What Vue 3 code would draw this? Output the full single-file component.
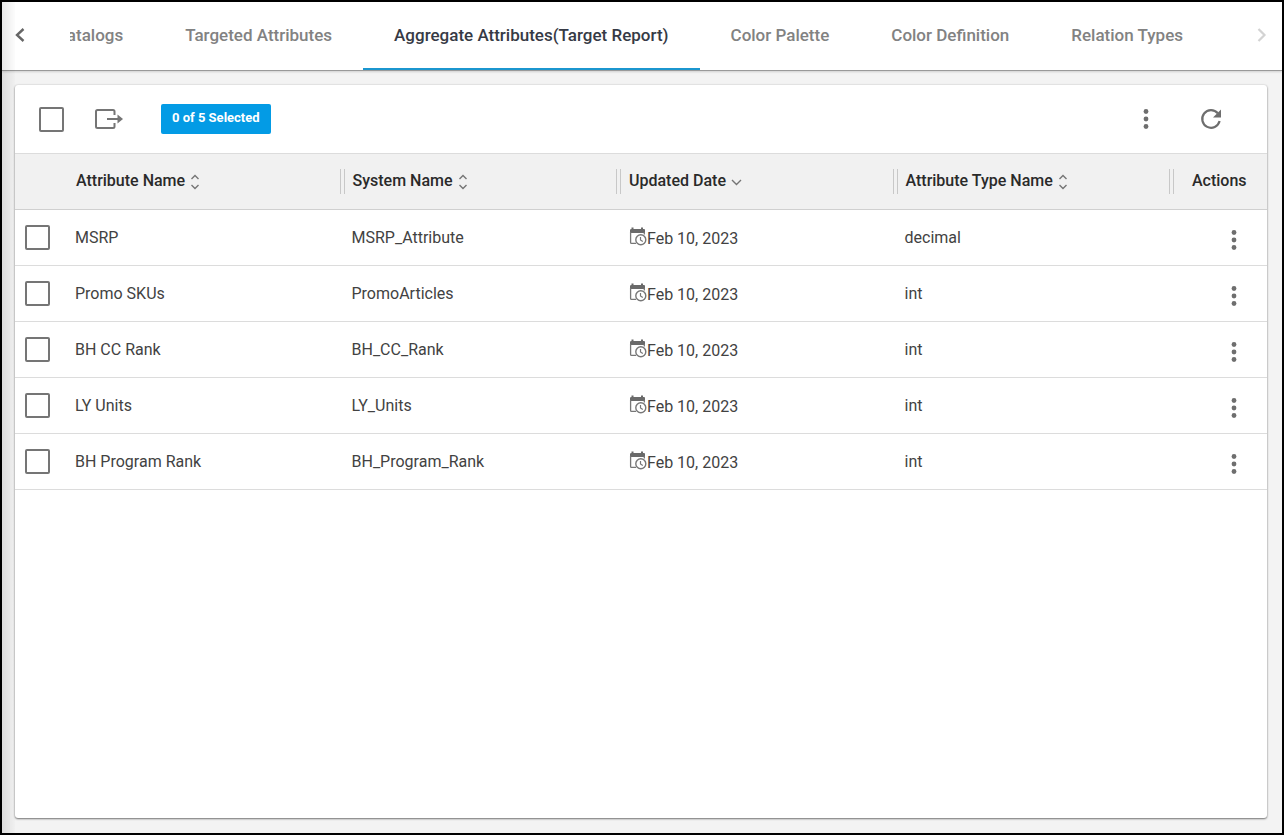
<script setup>
import { ref } from 'vue'

const tabs = ['Catalogs', 'Targeted Attributes', 'Aggregate Attributes(Target Report)', 'Color Palette', 'Color Definition', 'Relation Types']
const activeTab = ref(2)

const columns = [
  { label: 'Attribute Name', sort: 'both' },
  { label: 'System Name', sort: 'both' },
  { label: 'Updated Date', sort: 'down' },
  { label: 'Attribute Type Name', sort: 'both' },
]

const rows = ref([
  { name: 'MSRP', system: 'MSRP_Attribute', date: 'Feb 10, 2023', type: 'decimal', checked: false },
  { name: 'Promo SKUs', system: 'PromoArticles', date: 'Feb 10, 2023', type: 'int', checked: false },
  { name: 'BH CC Rank', system: 'BH_CC_Rank', date: 'Feb 10, 2023', type: 'int', checked: false },
  { name: 'LY Units', system: 'LY_Units', date: 'Feb 10, 2023', type: 'int', checked: false },
  { name: 'BH Program Rank', system: 'BH_Program_Rank', date: 'Feb 10, 2023', type: 'int', checked: false },
])

function toggleAll(event) {
  rows.value.forEach((row) => { row.checked = event.target.checked })
}
</script>

<template>
  <div class="page">
    <nav class="tabbar">
      <button class="nav prev" aria-label="Previous tabs">
        <svg width="12" height="16" viewBox="0 0 12 16"><path d="M9.5 2 L3 8 L9.5 14" fill="none" stroke="#666" stroke-width="2.4" /></svg>
      </button>
      <div class="tabs" role="tablist">
        <button
          v-for="(tab, i) in tabs"
          :key="tab"
          class="tab"
          :class="{ active: i === activeTab }"
          role="tab"
          :aria-selected="i === activeTab"
          @click="activeTab = i"
        >{{ tab }}</button>
      </div>
      <button class="nav next" aria-label="Next tabs">
        <svg width="12" height="16" viewBox="0 0 12 16"><path d="M2.5 2 L8.5 8 L2.5 14" fill="none" stroke="#d3d3d3" stroke-width="2.2" /></svg>
      </button>
    </nav>

    <main class="content">
      <section class="card">
        <div class="toolbar">
          <input type="checkbox" class="check" aria-label="Select all" @change="toggleAll" />
          <button class="icon export" aria-label="Export">
            <svg width="28" height="22" viewBox="0 0 28 22">
              <path d="M19.5 7 V3.5 Q19.5 2 18 2 H2.5 Q1 2 1 3.5 V18.5 Q1 20 2.5 20 H18 Q19.5 20 19.5 18.5 V15" fill="none" stroke="#757575" stroke-width="2" />
              <path d="M12 11 H24" stroke="#757575" stroke-width="2" />
              <path d="M22.5 6.5 L28 11 L22.5 15.5 Z" fill="#757575" />
            </svg>
          </button>
          <span class="badge">{{ rows.filter((r) => r.checked).length }} of {{ rows.length }} Selected</span>
          <div class="spacer"></div>
          <button class="icon more" aria-label="More options">
            <svg width="6" height="20" viewBox="0 0 6 20" fill="#6e6e6e"><circle cx="3" cy="2.5" r="2.4" /><circle cx="3" cy="10" r="2.4" /><circle cx="3" cy="17.5" r="2.4" /></svg>
          </button>
          <button class="icon refresh" aria-label="Refresh">
            <svg width="22" height="22" viewBox="0 0 22 22">
              <path d="M17.8 5.3 A8.8 8.8 0 1 0 19.6 13.1" fill="none" stroke="#6e6e6e" stroke-width="2.2" />
              <path d="M21 1.5 V9.5 H13 Z" fill="#6e6e6e" />
            </svg>
          </button>
        </div>

        <table class="grid">
          <colgroup>
            <col class="c-check" />
            <col v-for="c in columns" :key="c.label" />
            <col class="c-actions" />
          </colgroup>
          <thead>
            <tr>
              <td></td>
              <th v-for="c in columns" :key="c.label" scope="col">
                <div class="head">
                  <button class="sort">
                    <span>{{ c.label }}</span>
                    <svg v-if="c.sort === 'both'" width="10" height="16" viewBox="0 0 10 16"><path d="M1.5 5 L5 1.5 L8.5 5 M1.5 11 L5 14.5 L8.5 11" /></svg>
                    <svg v-else width="11" height="16" viewBox="0 0 11 16"><path d="M1 6 L5.5 10.5 L10 6" /></svg>
                  </button>
                  <span class="resizer"></span>
                </div>
              </th>
              <th scope="col" class="actions-head">Actions</th>
            </tr>
          </thead>
          <tbody>
            <tr v-for="row in rows" :key="row.name">
              <td class="check-cell"><input v-model="row.checked" type="checkbox" class="check" :aria-label="'Select ' + row.name" /></td>
              <td>{{ row.name }}</td>
              <td>{{ row.system }}</td>
              <td class="date-cell">
                <span class="date">
                  <svg width="18" height="20" viewBox="0 0 18 20">
                    <path d="M2.5 0.5 H4.5 V2 H12 V0.5 H14 V2 H15 Q16 2 16 3 V6 H1 V3 Q1 2 2.5 2 Z" fill="#6a6a6a" />
                    <path d="M1.6 5 V15.4 Q1.6 16.3 2.5 16.3 H7 M15.3 5 V7.5" fill="none" stroke="#777" stroke-width="1.3" />
                    <circle cx="11.8" cy="12.8" r="5" fill="#fff" stroke="#777" stroke-width="1.4" />
                    <path d="M11.5 10 V13 L13.8 14.6" fill="none" stroke="#777" stroke-width="1.2" />
                  </svg><span>{{ row.date }}</span>
                </span>
              </td>
              <td>{{ row.type }}</td>
              <td class="action-cell">
                <button class="icon" :aria-label="'Actions for ' + row.name">
                  <svg width="6" height="20" viewBox="0 0 6 20" fill="#6e6e6e"><circle cx="3" cy="2.5" r="2.4" /><circle cx="3" cy="10" r="2.4" /><circle cx="3" cy="17.5" r="2.4" /></svg>
                </button>
              </td>
            </tr>
          </tbody>
        </table>
      </section>
    </main>
  </div>
</template>

<style>
body { margin: 0; background: #f3f3f3; }
</style>

<style scoped>
* { box-sizing: border-box; }
.page {
  display: flex;
  flex-direction: column;
  position: relative;
  min-height: 100vh;
  border: 2px solid #000;
  background: #f3f3f3;
  font-family: Roboto, "Liberation Sans", sans-serif;
  font-size: 16px;
  color: #424242;
}
.page::before {
  content: "";
  position: absolute;
  inset: 0 auto 0 0;
  width: 13px;
  background: linear-gradient(to right, rgba(0, 0, 0, 0.09), rgba(0, 0, 0, 0.01));
  pointer-events: none;
}
button { padding: 0; border: 0; background: none; font: inherit; color: inherit; cursor: pointer; }
svg { display: block; flex: none; }

.tabbar {
  display: flex;
  height: 69px;
  background: #fff;
  border-bottom: 1px solid #999;
  box-shadow: 0 1px 2px rgba(0, 0, 0, 0.15);
}
.nav { display: flex; align-items: center; flex: 0 0 68px; }
.nav svg { margin-bottom: 2px; }
.prev { padding-left: 12px; }
.next { justify-content: flex-end; padding-right: 14px; }
.tabs { display: flex; justify-content: flex-end; flex: 1; min-width: 0; overflow: hidden; }
.tab {
  flex: none;
  padding: 0 31px;
  border-bottom: 2px solid transparent;
  font-size: 17px;
  font-weight: 500;
  white-space: nowrap;
  color: #828282;
}
.tab.active { border-bottom-color: #1b96cf; color: #363a45; }

.content { display: flex; flex: 1; padding: 14px 15px 15px 13px; }
.card {
  flex: 1;
  min-width: 0;
  background: #fff;
  border-radius: 3px;
  box-shadow: 0 1px 2px rgba(0, 0, 0, 0.5), 0 0 2px rgba(0, 0, 0, 0.15);
}
.toolbar { display: flex; align-items: center; height: 68px; padding: 0 45px 0 24px; }
.check {
  appearance: none;
  display: block;
  width: 25px;
  height: 25px;
  margin: 0;
  border: 2px solid #757575;
  border-radius: 2px;
  background: #fff;
}
.check:checked { background: #039be5; }
.icon { display: flex; align-items: center; justify-content: center; }
.export { margin: 0 38px 0 31px; }
.badge {
  padding: 0 11px 2px;
  border-radius: 2px;
  background: #039be5;
  color: #fff;
  font-size: 13px;
  font-weight: 700;
  line-height: 28px;
}
.spacer { flex: 1; }
.refresh { margin-left: 51px; }

.grid { width: 100%; table-layout: fixed; border-collapse: separate; border-spacing: 0; }
.c-check { width: 50px; }
.c-actions { width: 96px; }
.grid td, .grid th { height: 56px; padding: 0 0 1px 10px; border-bottom: 1px solid #dcdcdc; text-align: left; }
thead td, thead th { background: #f1f1f1; border-top: 1px solid #dcdcdc; }
.grid thead td, .grid thead th { height: 57px; padding: 0 0 0 11px; border-bottom-color: #d0d0d0; font-weight: 500; color: #2a2a2a; }
.head { display: flex; align-items: center; justify-content: space-between; margin-right: -3px; }
.sort { display: flex; align-items: center; gap: 5px; padding-bottom: 2px; white-space: nowrap; }
.sort svg { margin-top: 2px; fill: none; stroke: #757575; stroke-width: 1.4; }
.resizer { width: 5px; height: 25px; border: solid #c8c8c8; border-width: 0 1px; }
.grid .actions-head { padding: 0 0 2px 21px; }
.grid .check-cell { padding-bottom: 0; }
.grid .date-cell { padding-left: 11px; }
.grid .action-cell { padding: 4px 0 0 60px; }
.date { display: flex; align-items: center; padding-top: 3px; }
.date svg { margin-bottom: 4px; }
</style>
